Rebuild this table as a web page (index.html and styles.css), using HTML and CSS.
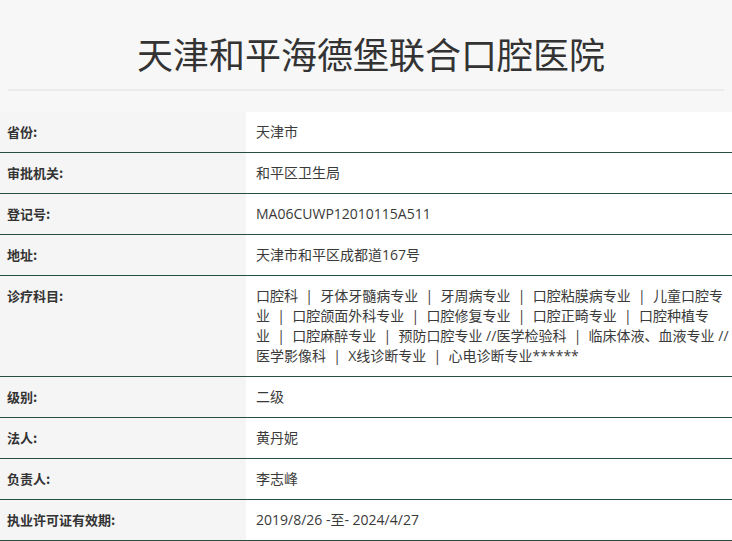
FILE: index.html
```html
<!DOCTYPE html>
<html lang="zh-CN">
<head>
<meta charset="utf-8">
<title>天津和平海德堡联合口腔医院</title>
<link rel="stylesheet" href="styles.css">
</head>
<body>
<div class="page">
  <header class="head">
    <h1 class="title">天津和平海德堡联合口腔医院</h1>
  </header>
  <div class="info">
    <div class="row"><div class="label">省份:</div><div class="value">天津市</div></div>
    <div class="row"><div class="label">审批机关:</div><div class="value">和平区卫生局</div></div>
    <div class="row"><div class="label">登记号:</div><div class="value">MA06CUWP12010115A511</div></div>
    <div class="row"><div class="label">地址:</div><div class="value">天津市和平区成都道167号</div></div>
    <div class="row"><div class="label">诊疗科目:</div><div class="value">口腔科&nbsp;&nbsp;|&nbsp;&nbsp;牙体牙髓病专业&nbsp;&nbsp;|&nbsp;&nbsp;牙周病专业&nbsp;&nbsp;|&nbsp;&nbsp;口腔粘膜病专业&nbsp;&nbsp;|&nbsp;&nbsp;儿童口腔专业&nbsp;&nbsp;|&nbsp;&nbsp;口腔颌面外科专业&nbsp;&nbsp;|&nbsp;&nbsp;口腔修复专业&nbsp;&nbsp;|&nbsp;&nbsp;口腔正畸专业&nbsp;&nbsp;|&nbsp;&nbsp;口腔种植专业&nbsp;&nbsp;|&nbsp;&nbsp;口腔麻醉专业&nbsp;&nbsp;|&nbsp;&nbsp;预防口腔专业 //医学检验科&nbsp;&nbsp;|&nbsp;&nbsp;临床体液、血液专业 // 医学影像科&nbsp;&nbsp;|&nbsp;&nbsp;X线诊断专业&nbsp;&nbsp;|&nbsp;&nbsp;心电诊断专业******</div></div>
    <div class="row"><div class="label">级别:</div><div class="value">二级</div></div>
    <div class="row"><div class="label">法人:</div><div class="value">黄丹妮</div></div>
    <div class="row"><div class="label">负责人:</div><div class="value">李志峰</div></div>
    <div class="row"><div class="label">执业许可证有效期:</div><div class="value">2019/8/26 -至- 2024/4/27</div></div>
  </div>
</div>
</body>
</html>
```
FILE: styles.css
```css
html, body {
  margin: 0;
  padding: 0;
  background: #f7f7f7;
}
body {
  font-family: "Open Sans", "Noto Sans CJK SC", sans-serif;
  color: #333;
}
.head {
  margin: 0 8px;
  height: 89px;
  border-bottom: 2px solid #ebebeb;
  display: flex;
  align-items: center;
  justify-content: center;
}
.title {
  margin: 0;
  font-family: "Noto Sans CJK SC", sans-serif;
  font-weight: 400;
  font-size: 36px;
  line-height: 40px;
  color: #333;
  padding-top: 16px;
  padding-left: 10px;
}
.info {
  margin-top: 21px;
}
.row {
  display: grid;
  grid-template-columns: 246px 1fr;
  border-bottom: 1px solid #24503d;
}
.label {
  background: #f5f5f5;
  padding: 10px 7px;
  font-size: 13px;
  line-height: 20px;
  font-weight: 700;
  font-family: "Noto Sans CJK SC", sans-serif;
}
.value {
  background: #fff;
  padding: 10px 2px 10px 10px;
  font-size: 14px;
  line-height: 20px;
  color: #3a3a3a;
  font-family: "Open Sans", "Noto Sans CJK SC", sans-serif;
}
```
